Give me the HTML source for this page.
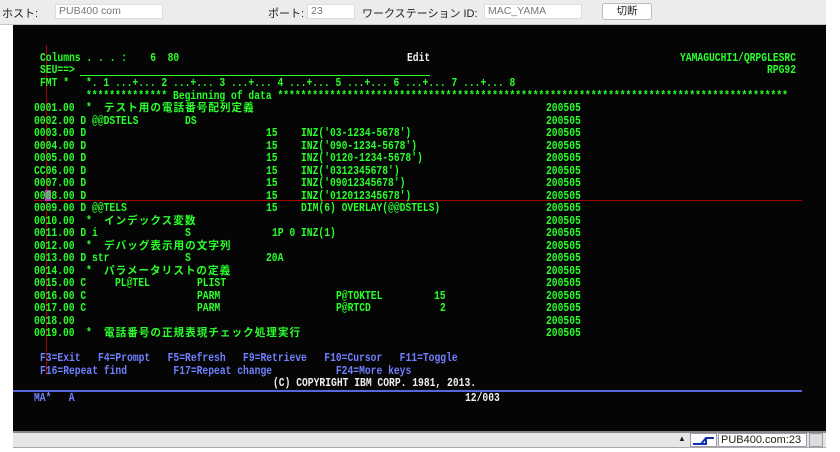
<!DOCTYPE html>
<html><head><meta charset="utf-8"><style>
*{margin:0;padding:0;box-sizing:border-box}
body{width:840px;height:450px;background:#fff;position:relative;overflow:hidden;font-family:"Liberation Sans","Noto Sans CJK JP",sans-serif}
#top{position:absolute;left:0;top:0;width:826px;height:25px;background:#ececec;border-bottom:1px solid #c8c8c8;font-size:11px;color:#222}
#top span,#top div{position:absolute;top:5px}
.inp{height:15px;background:#fff;border:1px solid #ddd;color:#777;font-size:10.5px;padding-left:3px;line-height:13px;top:4px!important}
.btn{height:17px;top:3px!important;background:#fff;border:1px solid #bbb;border-radius:3px;text-align:center;line-height:15px;font-size:10.5px}
#term{position:absolute;left:13px;top:25px;width:813px;height:406px;background:#050505}
.l{position:absolute;height:12px;line-height:12px;white-space:pre;font-family:"Liberation Mono",monospace;font-weight:bold;font-size:12px;transform:scaleX(0.8056);transform-origin:0 0;color:#2bff2b}
.j{position:absolute;left:104px;height:12px;line-height:12px;white-space:pre;font-family:"Noto Sans CJK JP",sans-serif;font-weight:bold;font-size:10.6px;letter-spacing:1px;color:#2bff2b}
.b{color:#7080ff}
.w{color:#f0f0f0}
#status{position:absolute;left:13px;top:431px;width:813px;height:17px;background:#e6e6e6;border-top:2px solid #8a8a8a;border-bottom:1px solid #aaa}
</style></head><body>
<div id="top">
<span style="left:2px">ホスト:</span>
<div class="inp" style="left:55px;width:108px">PUB400 com</div>
<span style="left:268px">ポート:</span>
<div class="inp" style="left:307px;width:48px">23</div>
<span style="left:362px">ワークステーション ID:</span>
<div class="inp" style="left:484px;width:98px">MAC_YAMA</div>
<div class="btn" style="left:602px;width:50px">切断</div>
</div>
<div id="term"></div>
<div style="position:absolute;left:46px;top:45px;width:1px;height:330px;background:#a00000"></div>
<div style="position:absolute;left:34px;top:200px;width:768px;height:1px;background:#a00000"></div>
<div style="position:absolute;left:45px;top:190px;width:6px;height:11px;background:#c030d0"></div>
<div style="position:absolute;left:80px;top:75px;width:350px;height:1px;background:#2bff2b"></div>

<div class="l" style="top:52px;left:40px">Columns . . . :    6  80</div>
<div class="l w" style="top:52px;left:407px">Edit</div>
<div class="l" style="top:52px;left:680px">YAMAGUCHI1/QRPGLESRC</div>
<div class="l" style="top:64px;left:40px">SEU==&gt;</div>
<div class="l" style="top:64px;left:767px">RPG92</div>
<div class="l" style="top:77px;left:40px">FMT *</div>
<div class="l" style="top:77px;left:86px">*. 1 ...+... 2 ...+... 3 ...+... 4 ...+... 5 ...+... 6 ...+... 7 ...+... 8</div>
<div class="l" style="top:90px;left:86px">************** Beginning of data ****************************************************************************************</div>

<div class="l" style="top:102px;left:34px">0001.00</div><div class="l" style="top:102px;left:86px">*</div><div class="j" style="top:102px">テスト用の電話番号配列定義</div>
<div class="l" style="top:115px;left:34px">0002.00 D @@DSTELS</div><div class="l" style="top:115px;left:185px">DS</div>
<div class="l" style="top:127px;left:34px">0003.00 D</div><div class="l" style="top:127px;left:266px">15</div><div class="l" style="top:127px;left:301px">INZ('03-1234-5678')</div>
<div class="l" style="top:140px;left:34px">0004.00 D</div><div class="l" style="top:140px;left:266px">15</div><div class="l" style="top:140px;left:301px">INZ('090-1234-5678')</div>
<div class="l" style="top:152px;left:34px">0005.00 D</div><div class="l" style="top:152px;left:266px">15</div><div class="l" style="top:152px;left:301px">INZ('0120-1234-5678')</div>
<div class="l" style="top:165px;left:34px">CC06.00 D</div><div class="l" style="top:165px;left:266px">15</div><div class="l" style="top:165px;left:301px">INZ('0312345678')</div>
<div class="l" style="top:177px;left:34px">0007.00 D</div><div class="l" style="top:177px;left:266px">15</div><div class="l" style="top:177px;left:301px">INZ('09012345678')</div>
<div class="l" style="top:190px;left:34px">0008.00 D</div><div class="l" style="top:190px;left:266px">15</div><div class="l" style="top:190px;left:301px">INZ('012012345678')</div>
<div class="l" style="top:202px;left:34px">0009.00 D @@TELS</div><div class="l" style="top:202px;left:266px">15</div><div class="l" style="top:202px;left:301px">DIM(6) OVERLAY(@@DSTELS)</div>
<div class="l" style="top:215px;left:34px">0010.00</div><div class="l" style="top:215px;left:86px">*</div><div class="j" style="top:215px">インデックス変数</div>
<div class="l" style="top:227px;left:34px">0011.00 D i</div><div class="l" style="top:227px;left:185px">S</div><div class="l" style="top:227px;left:272px">1P 0 INZ(1)</div>
<div class="l" style="top:240px;left:34px">0012.00</div><div class="l" style="top:240px;left:86px">*</div><div class="j" style="top:240px">デバッグ表示用の文字列</div>
<div class="l" style="top:252px;left:34px">0013.00 D str</div><div class="l" style="top:252px;left:185px">S</div><div class="l" style="top:252px;left:266px">20A</div>
<div class="l" style="top:265px;left:34px">0014.00</div><div class="l" style="top:265px;left:86px">*</div><div class="j" style="top:265px">パラメータリストの定義</div>
<div class="l" style="top:277px;left:34px">0015.00 C</div><div class="l" style="top:277px;left:115px">PL@TEL</div><div class="l" style="top:277px;left:197px">PLIST</div>
<div class="l" style="top:290px;left:34px">0016.00 C</div><div class="l" style="top:290px;left:197px">PARM</div><div class="l" style="top:290px;left:336px">P@TOKTEL</div><div class="l" style="top:290px;left:434px">15</div>
<div class="l" style="top:302px;left:34px">0017.00 C</div><div class="l" style="top:302px;left:197px">PARM</div><div class="l" style="top:302px;left:336px">P@RTCD</div><div class="l" style="top:302px;left:440px">2</div>
<div class="l" style="top:315px;left:34px">0018.00</div>
<div class="l" style="top:327px;left:34px">0019.00</div><div class="l" style="top:327px;left:86px">*</div><div class="j" style="top:327px">電話番号の正規表現チェック処理実行</div>
<div class="l" style="top:102px;left:546px;line-height:12.5px;height:auto">200505
200505
200505
200505
200505
200505
200505
200505
200505
200505
200505
200505
200505
200505
200505
200505
200505
200505
200505</div>

<div class="l b" style="top:352px;left:40px">F3=Exit   F4=Prompt   F5=Refresh   F9=Retrieve   F10=Cursor   F11=Toggle</div>
<div class="l b" style="top:365px;left:40px">F16=Repeat find        F17=Repeat change           F24=More keys</div>
<div class="l w" style="top:377px;left:273px">(C) COPYRIGHT IBM CORP. 1981, 2013.</div>
<div style="position:absolute;left:13px;top:390px;width:789px;height:2px;background:#5566dd"></div>
<div class="l b" style="top:392px;left:34px">MA*   A</div>
<div class="l w" style="top:392px;left:465px">12/003</div>

<div id="status">
<span style="position:absolute;left:665px;top:1px;font-size:8px;color:#222">▲</span>
<div style="position:absolute;left:677px;top:0;width:27px;height:14px;background:#fff;border:1px solid #99a">
<svg width="25" height="12" viewBox="0 0 25 12"><path d="M2 9H10L15 3H23M15 3V9M2 9H16" stroke="#1030b0" stroke-width="2" fill="none"/></svg></div>
<div style="position:absolute;left:705px;top:0;width:89px;height:14px;background:#fff;border:1px solid #99a;font-size:11px;line-height:12px;color:#222;padding-left:2px">PUB400.com:23</div>
<div style="position:absolute;left:796px;top:0;width:14px;height:14px;border:1px solid #99a;background:#ddd"></div>
</div>
</body></html>
